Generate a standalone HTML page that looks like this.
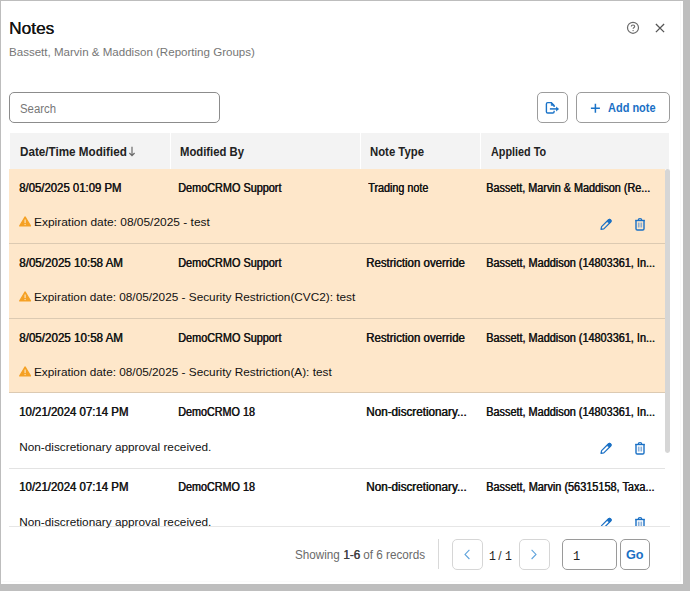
<!DOCTYPE html>
<html><head><meta charset="utf-8">
<style>
*{box-sizing:border-box;margin:0;padding:0}
html,body{width:693px;height:594px;overflow:hidden;background:#fff;position:relative;font-family:"Liberation Sans",sans-serif}
.a{position:absolute}
.t{position:absolute;white-space:nowrap;line-height:1}
.btn{position:absolute;border:1px solid #9c9c9c;border-radius:5px;background:#fff}
.hd{position:absolute;top:133px;height:36px;background:#f3f3f3}
.o{background:#fee7ca}
.ol{background:#dccab2}
.w{background:#fff}
.wl{background:#e3e3e3}
</style></head><body>
<div class="a" style="left:0;top:0;width:683px;height:1px;background:#bdbdbd"></div>
<div class="a" style="left:0;top:0;width:1px;height:584px;background:#bdbdbd"></div>
<div class="a" style="left:683px;top:0;width:7px;height:590px;background:#bebebe"></div>
<div class="a" style="left:0;top:584px;width:690px;height:7px;background:#bebebe"></div>
<div class="a" style="left:680px;top:2px;width:1px;height:580px;background:#f9f9f9"></div>
<div class="a" style="left:2px;top:581px;width:679px;height:1px;background:#fbfbfb"></div>

<!-- help / close -->
<svg class="a" style="left:626px;top:21px" width="14" height="14" viewBox="0 0 14 14">
  <circle cx="7" cy="6.8" r="5.5" fill="none" stroke="#6a6a6a" stroke-width="1.2"/>
  <path d="M5.3 5.5 C5.3 4.5 6.1 4 7 4 C7.9 4 8.7 4.5 8.7 5.4 C8.7 6.4 7.1 6.5 7.1 7.8" fill="none" stroke="#6a6a6a" stroke-width="1.15"/>
  <circle cx="7.1" cy="9.6" r="0.7" fill="#6a6a6a"/>
</svg>
<svg class="a" style="left:654px;top:22px" width="12" height="12" viewBox="0 0 12 12">
  <path d="M1.9 2 L10.1 10.1 M10.1 2 L1.9 10.1" stroke="#555" stroke-width="1.3"/>
</svg>

<!-- search -->
<div class="btn" style="left:9px;top:92px;width:211px;height:31px;border-color:#8c8c8c"></div>

<!-- export button -->
<div class="btn" style="left:537px;top:92px;width:31px;height:31px"></div>
<svg class="a" style="left:544px;top:100px" width="18" height="16" viewBox="0 0 18 16">
  <path d="M10.1 6.9 V5.5 L7.2 2.6 H3.7 Q2.4 2.6 2.4 3.9 V11.7 Q2.4 13 3.7 13 H8.8 Q10.1 13 10.1 11.7 V10.8" fill="none" stroke="#1a73c8" stroke-width="1.4" stroke-linejoin="round"/>
  <path d="M7.2 2.6 V5.5 H10.1 Z" fill="#1a73c8" stroke="#1a73c8" stroke-width="0.5" stroke-linejoin="round"/>
  <path d="M5.9 8.9 H13" stroke="#1a73c8" stroke-width="1.5"/>
  <path d="M12.1 6.4 L15.1 8.9 L12.1 11.4 Z" fill="#1a73c8"/>
</svg>

<!-- add note -->
<div class="btn" style="left:576px;top:92px;width:94px;height:31px"></div>
<svg class="a" style="left:590px;top:103px" width="11" height="11" viewBox="0 0 11 11">
  <path d="M5.4 0.8 V9.8 M0.9 5.3 H9.9" stroke="#1a73c8" stroke-width="1.5"/>
</svg>

<!-- header -->
<div class="hd" style="left:10px;width:159.6px"></div>
<div class="hd" style="left:170.6px;width:189px"></div>
<div class="hd" style="left:360.6px;width:119px"></div>
<div class="hd" style="left:480.6px;width:188.4px"></div>
<svg class="a" style="left:128px;top:146px" width="8" height="11" viewBox="0 0 8 11">
  <path d="M4 0.8 V9.6 M1.4 7 L4 9.7 L6.6 7" fill="none" stroke="#6b6b6b" stroke-width="1.2"/>
</svg>

<!-- body rows -->
<div class="a" style="left:0;top:169px;width:693px;height:357px;overflow:hidden">
<div class="a" style="left:0;top:-169px;width:693px;height:594px">
<div class="a o" style="left:9px;top:169px;width:656.3px;height:75px"></div>
<svg class="a" style="left:18px;top:215px" width="15" height="13" viewBox="0 0 15 13"><path d="M7.1 1.9 L12.5 10.9 H1.7 Z" fill="#f5a124" stroke="#f5a124" stroke-width="1.2" stroke-linejoin="round"/><path d="M7.1 4.6 V7.9" stroke="#fde3bd" stroke-width="1.2"/><circle cx="7.1" cy="9.5" r="0.65" fill="#fde3bd"/></svg>
<svg class="a" style="left:598px;top:217px" width="16" height="15" viewBox="0 0 16 15"><path d="M3.0 12.4 L3.58 9.57 L10.48 2.76 A1.6 1.6 0 0 1 12.72 5.04 L5.83 11.85 Z" fill="none" stroke="#1a70c5" stroke-width="1.2" stroke-linejoin="round"/><path d="M8.92 4.31 L10.48 2.76 A1.6 1.6 0 0 1 12.72 5.04 L11.16 6.59 Z" fill="#1a70c5" stroke="#1a70c5" stroke-width="0.6"/></svg>
<svg class="a" style="left:633px;top:217px" width="14" height="15" viewBox="0 0 14 15"><path d="M2.1 3.5 H11.9" stroke="#1a70c5" stroke-width="1.4"/><path d="M5.2 3.3 Q5.2 1.7 7 1.7 Q8.8 1.7 8.8 3.3" fill="none" stroke="#1a70c5" stroke-width="1.2"/><path d="M3 4 V11.7 Q3 13 4.3 13 H9.7 Q11 13 11 11.7 V4" fill="none" stroke="#1a70c5" stroke-width="1.4"/><path d="M5.4 5.6 V10.5 M7 5.6 V10.5 M8.6 5.6 V10.5" stroke="#6f9fd3" stroke-width="0.9"/></svg>
<div class="a o" style="left:9px;top:244px;width:656.3px;height:74px"></div>
<svg class="a" style="left:18px;top:290px" width="15" height="13" viewBox="0 0 15 13"><path d="M7.1 1.9 L12.5 10.9 H1.7 Z" fill="#f5a124" stroke="#f5a124" stroke-width="1.2" stroke-linejoin="round"/><path d="M7.1 4.6 V7.9" stroke="#fde3bd" stroke-width="1.2"/><circle cx="7.1" cy="9.5" r="0.65" fill="#fde3bd"/></svg>
<div class="a o" style="left:9px;top:318px;width:656.3px;height:75px"></div>
<svg class="a" style="left:18px;top:365px" width="15" height="13" viewBox="0 0 15 13"><path d="M7.1 1.9 L12.5 10.9 H1.7 Z" fill="#f5a124" stroke="#f5a124" stroke-width="1.2" stroke-linejoin="round"/><path d="M7.1 4.6 V7.9" stroke="#fde3bd" stroke-width="1.2"/><circle cx="7.1" cy="9.5" r="0.65" fill="#fde3bd"/></svg>
<div class="a w" style="left:9px;top:393px;width:656.3px;height:75px"></div>
<svg class="a" style="left:598px;top:441px" width="16" height="15" viewBox="0 0 16 15"><path d="M3.0 12.4 L3.58 9.57 L10.48 2.76 A1.6 1.6 0 0 1 12.72 5.04 L5.83 11.85 Z" fill="none" stroke="#1a70c5" stroke-width="1.2" stroke-linejoin="round"/><path d="M8.92 4.31 L10.48 2.76 A1.6 1.6 0 0 1 12.72 5.04 L11.16 6.59 Z" fill="#1a70c5" stroke="#1a70c5" stroke-width="0.6"/></svg>
<svg class="a" style="left:633px;top:441px" width="14" height="15" viewBox="0 0 14 15"><path d="M2.1 3.5 H11.9" stroke="#1a70c5" stroke-width="1.4"/><path d="M5.2 3.3 Q5.2 1.7 7 1.7 Q8.8 1.7 8.8 3.3" fill="none" stroke="#1a70c5" stroke-width="1.2"/><path d="M3 4 V11.7 Q3 13 4.3 13 H9.7 Q11 13 11 11.7 V4" fill="none" stroke="#1a70c5" stroke-width="1.4"/><path d="M5.4 5.6 V10.5 M7 5.6 V10.5 M8.6 5.6 V10.5" stroke="#6f9fd3" stroke-width="0.9"/></svg>
<div class="a w" style="left:9px;top:468px;width:656.3px;height:75px"></div>
<svg class="a" style="left:598px;top:516px" width="16" height="15" viewBox="0 0 16 15"><path d="M3.0 12.4 L3.58 9.57 L10.48 2.76 A1.6 1.6 0 0 1 12.72 5.04 L5.83 11.85 Z" fill="none" stroke="#1a70c5" stroke-width="1.2" stroke-linejoin="round"/><path d="M8.92 4.31 L10.48 2.76 A1.6 1.6 0 0 1 12.72 5.04 L11.16 6.59 Z" fill="#1a70c5" stroke="#1a70c5" stroke-width="0.6"/></svg>
<svg class="a" style="left:633px;top:516px" width="14" height="15" viewBox="0 0 14 15"><path d="M2.1 3.5 H11.9" stroke="#1a70c5" stroke-width="1.4"/><path d="M5.2 3.3 Q5.2 1.7 7 1.7 Q8.8 1.7 8.8 3.3" fill="none" stroke="#1a70c5" stroke-width="1.2"/><path d="M3 4 V11.7 Q3 13 4.3 13 H9.7 Q11 13 11 11.7 V4" fill="none" stroke="#1a70c5" stroke-width="1.4"/><path d="M5.4 5.6 V10.5 M7 5.6 V10.5 M8.6 5.6 V10.5" stroke="#6f9fd3" stroke-width="0.9"/></svg>
<div class="a ol" style="left:9px;top:243px;width:656.3px;height:1px"></div>
<div class="a ol" style="left:9px;top:318px;width:656.3px;height:1px"></div>
<div class="a ol" style="left:9px;top:392px;width:656.3px;height:1px"></div>
<div class="a wl" style="left:9px;top:468px;width:656.3px;height:1px"></div>
</div>
</div>

<!-- scrollbar + bottom line -->
<div class="a" style="left:665.3px;top:169px;width:4.8px;height:283.5px;border-radius:2.4px;background:#d6d6d6"></div>
<div class="a" style="left:9px;top:525.5px;width:661px;height:1px;background:#e6e6e6"></div>

<!-- footer -->
<div class="a" style="left:438px;top:538.5px;width:1px;height:30.5px;background:#d9d9d9"></div>
<div class="btn" style="left:452px;top:539px;width:31px;height:31px;border-color:#d6d6d6"></div>
<svg class="a" style="left:462px;top:548px" width="10" height="13" viewBox="0 0 10 13"><path d="M7.4 1.8 L3 6.4 L7.4 11" fill="none" stroke="#5fa3dc" stroke-width="1.1"/></svg>
<div class="btn" style="left:519px;top:539px;width:31px;height:31px;border-color:#d6d6d6"></div>
<svg class="a" style="left:529px;top:548px" width="10" height="13" viewBox="0 0 10 13"><path d="M2.6 1.8 L7 6.4 L2.6 11" fill="none" stroke="#5fa3dc" stroke-width="1.1"/></svg>
<div class="btn" style="left:562px;top:539px;width:54.5px;height:31px;border-color:#9a9a9a"></div>
<div class="btn" style="left:620px;top:539px;width:30px;height:31px;border-color:#9a9a9a"></div>

<div class="t" style="left:9.18px;top:20px;font-size:17px;color:#141414;text-shadow:0.35px 0 0 #141414;transform:scaleX(1.0163);transform-origin:0 0;">Notes</div>
<div class="t" style="left:9.1px;top:47px;font-size:11.5px;color:#767676;transform:scaleX(1.0045);transform-origin:0 0;">Bassett, Marvin &amp; Maddison (Reporting Groups)</div>
<div class="t" style="left:19.95px;top:103px;font-size:12px;color:#777;transform:scaleX(0.9472);transform-origin:0 0;">Search</div>
<div class="t" style="left:607.8px;top:102px;font-size:12px;font-weight:bold;color:#1a70c5;transform:scaleX(0.9154);transform-origin:0 0;">Add note</div>
<div class="t" style="left:20.13px;top:146px;font-size:12px;font-weight:bold;color:#222;transform:scaleX(0.9731);transform-origin:0 0;">Date/Time Modified</div>
<div class="t" style="left:179.86px;top:146px;font-size:12px;font-weight:bold;color:#222;transform:scaleX(0.9418);transform-origin:0 0;">Modified By</div>
<div class="t" style="left:370.36px;top:146px;font-size:12px;font-weight:bold;color:#222;transform:scaleX(0.9446);transform-origin:0 0;">Note Type</div>
<div class="t" style="left:491.3px;top:146px;font-size:12px;font-weight:bold;color:#222;transform:scaleX(0.9016);transform-origin:0 0;">Applied To</div>
<div class="t" style="left:18.65px;top:182px;font-size:12px;color:#141414;text-shadow:0.5px 0 0 #141414;transform:scaleX(0.9458);transform-origin:0 0;">8/05/2025 01:09 PM</div>
<div class="t" style="left:178.09px;top:182px;font-size:12px;color:#141414;text-shadow:0.5px 0 0 #141414;transform:scaleX(0.9053);transform-origin:0 0;">DemoCRMO Support</div>
<div class="t" style="left:367.8px;top:182px;font-size:12px;color:#141414;text-shadow:0.5px 0 0 #141414;transform:scaleX(0.8985);transform-origin:0 0;">Trading note</div>
<div class="t" style="left:486px;top:182px;font-size:12px;color:#141414;text-shadow:0.5px 0 0 #141414;transform:scaleX(0.9011);transform-origin:0 0;">Bassett, Marvin &amp; Maddison (Re...</div>
<div class="t" style="left:33.99px;top:217px;font-size:11.8px;color:#111;transform:scaleX(1.0116);transform-origin:0 0;">Expiration date: 08/05/2025 - test</div>
<div class="t" style="left:18.83px;top:257px;font-size:12px;color:#141414;text-shadow:0.5px 0 0 #141414;transform:scaleX(0.9660);transform-origin:0 0;">8/05/2025 10:58 AM</div>
<div class="t" style="left:178.09px;top:257px;font-size:12px;color:#141414;text-shadow:0.5px 0 0 #141414;transform:scaleX(0.9053);transform-origin:0 0;">DemoCRMO Support</div>
<div class="t" style="left:365.75px;top:257px;font-size:12px;color:#141414;text-shadow:0.5px 0 0 #141414;transform:scaleX(0.9544);transform-origin:0 0;">Restriction override</div>
<div class="t" style="left:485.69px;top:257px;font-size:12px;color:#141414;text-shadow:0.5px 0 0 #141414;transform:scaleX(0.9070);transform-origin:0 0;">Bassett, Maddison (14803361, In...</div>
<div class="t" style="left:34px;top:292px;font-size:11.8px;color:#111;">Expiration date: 08/05/2025 - Security Restriction(CVC2): test</div>
<div class="t" style="left:18.83px;top:332px;font-size:12px;color:#141414;text-shadow:0.5px 0 0 #141414;transform:scaleX(0.9660);transform-origin:0 0;">8/05/2025 10:58 AM</div>
<div class="t" style="left:178.09px;top:332px;font-size:12px;color:#141414;text-shadow:0.5px 0 0 #141414;transform:scaleX(0.9053);transform-origin:0 0;">DemoCRMO Support</div>
<div class="t" style="left:365.75px;top:332px;font-size:12px;color:#141414;text-shadow:0.5px 0 0 #141414;transform:scaleX(0.9544);transform-origin:0 0;">Restriction override</div>
<div class="t" style="left:485.69px;top:332px;font-size:12px;color:#141414;text-shadow:0.5px 0 0 #141414;transform:scaleX(0.9070);transform-origin:0 0;">Bassett, Maddison (14803361, In...</div>
<div class="t" style="left:34px;top:367px;font-size:11.8px;color:#111;">Expiration date: 08/05/2025 - Security Restriction(A): test</div>
<div class="t" style="left:19.35px;top:406px;font-size:12px;color:#141414;text-shadow:0.5px 0 0 #141414;transform:scaleX(0.9513);transform-origin:0 0;">10/21/2024 07:14 PM</div>
<div class="t" style="left:178.1px;top:406px;font-size:12px;color:#141414;text-shadow:0.5px 0 0 #141414;transform:scaleX(0.8988);transform-origin:0 0;">DemoCRMO 18</div>
<div class="t" style="left:365.73px;top:406px;font-size:12px;color:#141414;text-shadow:0.5px 0 0 #141414;transform:scaleX(0.9735);transform-origin:0 0;">Non-discretionary...</div>
<div class="t" style="left:485.69px;top:406px;font-size:12px;color:#141414;text-shadow:0.5px 0 0 #141414;transform:scaleX(0.9070);transform-origin:0 0;">Bassett, Maddison (14803361, In...</div>
<div class="t" style="left:19.2px;top:442px;font-size:11.8px;color:#111;">Non-discretionary approval received.</div>
<div class="t" style="left:19.35px;top:481px;font-size:12px;color:#141414;text-shadow:0.5px 0 0 #141414;transform:scaleX(0.9513);transform-origin:0 0;">10/21/2024 07:14 PM</div>
<div class="t" style="left:178.1px;top:481px;font-size:12px;color:#141414;text-shadow:0.5px 0 0 #141414;transform:scaleX(0.8988);transform-origin:0 0;">DemoCRMO 18</div>
<div class="t" style="left:365.73px;top:481px;font-size:12px;color:#141414;text-shadow:0.5px 0 0 #141414;transform:scaleX(0.9735);transform-origin:0 0;">Non-discretionary...</div>
<div class="t" style="left:485.99px;top:481px;font-size:12px;color:#141414;text-shadow:0.5px 0 0 #141414;transform:scaleX(0.9087);transform-origin:0 0;">Bassett, Marvin (56315158, Taxa...</div>
<div class="t" style="left:19.2px;top:517px;font-size:11.8px;color:#111;">Non-discretionary approval received.</div>
<div class="t" style="left:294.62px;top:549px;font-size:12px;color:#6a6a6a;transform:scaleX(0.9750);transform-origin:0 0;">Showing <span style='color:#404040;text-shadow:0.35px 0 0 #404040'>1-6</span> of 6 records</div>
<div class="t" style="left:489.22px;top:550px;font-family:'Liberation Mono',monospace;font-size:13px;color:#222;transform:scaleX(0.8833);transform-origin:0 0;">1</div>
<div class="t" style="left:498.3px;top:550px;font-size:12px;color:#333;">/</div>
<div class="t" style="left:505.22px;top:550px;font-family:'Liberation Mono',monospace;font-size:13px;color:#222;transform:scaleX(0.8833);transform-origin:0 0;">1</div>
<div class="t" style="left:573.28px;top:550px;font-family:'Liberation Mono',monospace;font-size:13px;color:#222;transform:scaleX(0.9167);transform-origin:0 0;">1</div>
<div class="t" style="left:625.69px;top:549px;font-size:12.5px;font-weight:bold;color:#1a70c5;transform:scaleX(1.0125);transform-origin:0 0;">Go</div>
</body></html>
